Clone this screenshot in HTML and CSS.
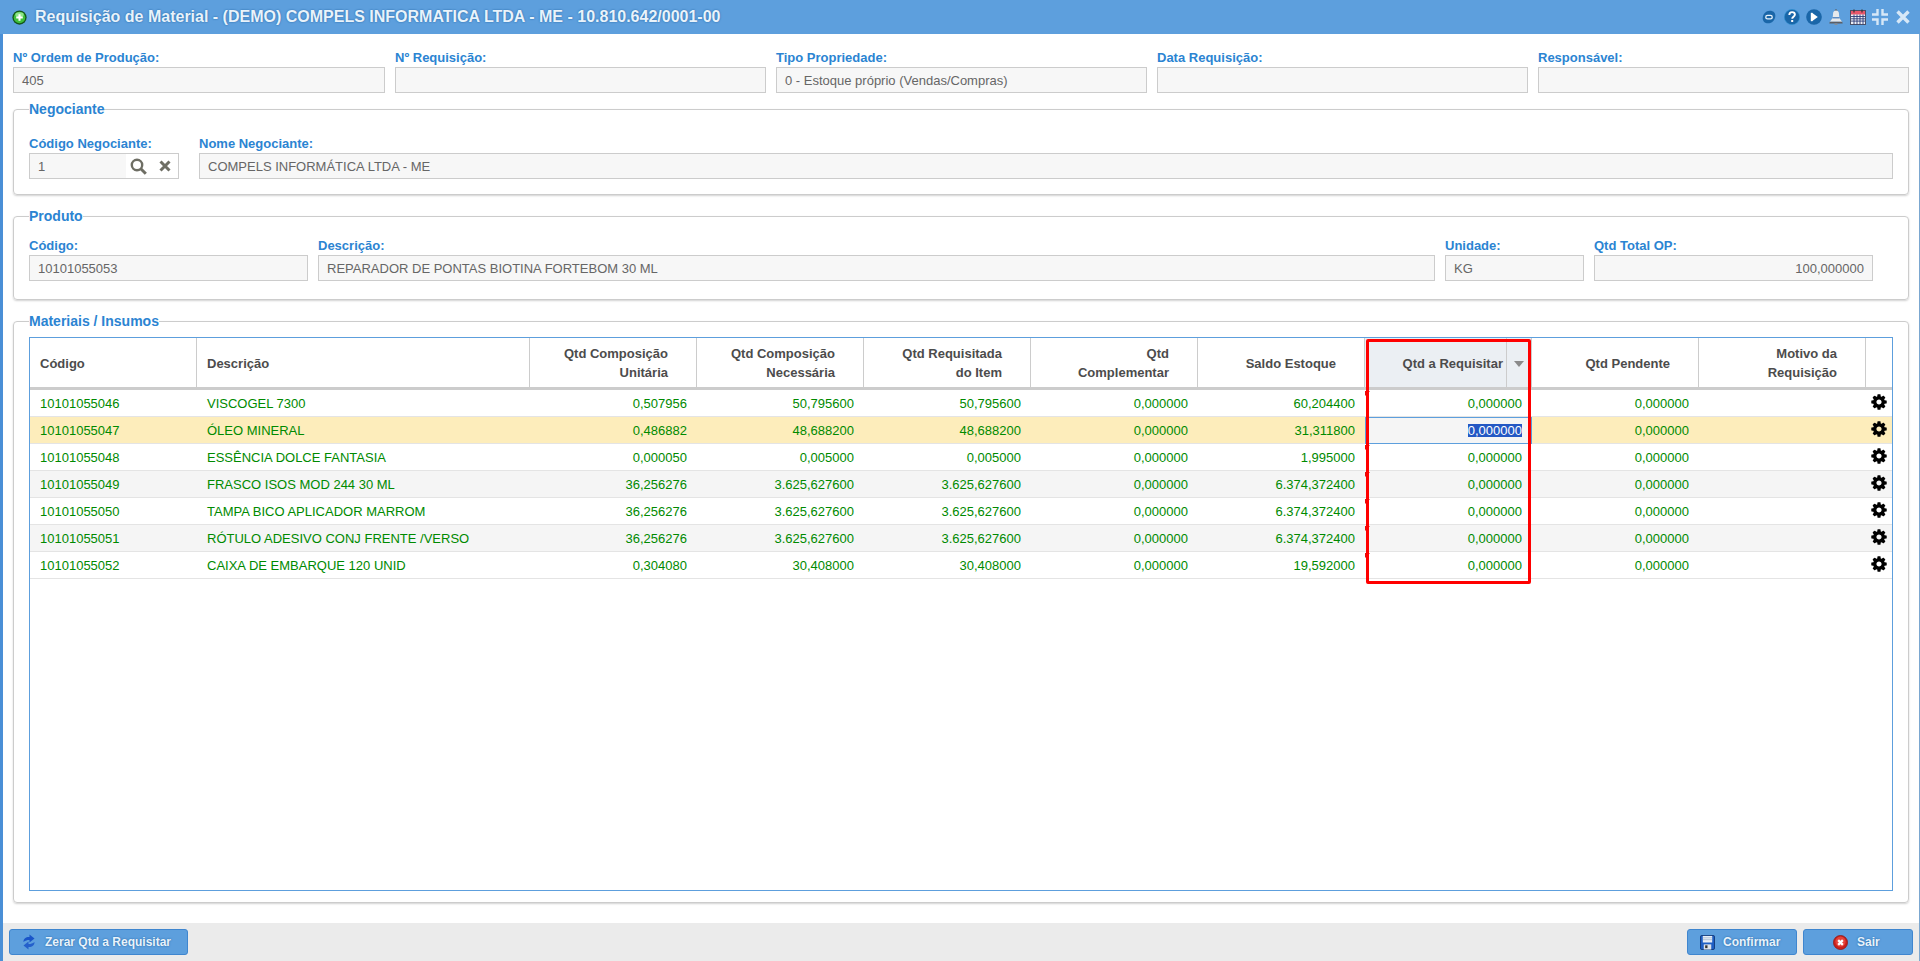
FILE: index.html
```html
<!DOCTYPE html>
<html lang="pt-BR">
<head>
<meta charset="utf-8">
<title>Requisição de Material</title>
<link rel="stylesheet" href="styles.css">
</head>
<body>
<svg class="sprite" aria-hidden="true">
  <symbol id="gear" viewBox="0 0 1792 1792"><path d="M1152 896q0-106-75-181t-181-75-181 75-75 181 75 181 181 75 181-75 75-181zm512-109v222q0 12-8 23t-20 13l-185 28q-19 54-39 91 35 50 107 138 10 12 10 25t-9 23q-27 37-99 108t-94 71q-12 0-26-9l-138-108q-44 23-91 38-16 136-29 186-7 28-36 28h-222q-14 0-24.5-8.5t-11.5-21.5l-28-184q-49-16-90-37l-141 107q-10 9-25 9-14 0-25-11-126-114-165-168-7-10-7-23 0-12 8-23 15-21 51-66.5t54-70.5q-27-50-41-99l-183-27q-13-2-21-12.5t-8-23.5v-222q0-12 8-23t19-13l186-28q14-46 39-92-40-57-107-138-10-12-10-24 0-10 9-23 26-36 98.5-107.5t94.5-71.5q13 0 26 10l138 107q44-23 91-38 16-136 29-186 7-28 36-28h222q14 0 24.5 8.5t11.5 21.5l28 184q49 16 90 37l142-107q9-9 24-9 13 0 25 10 129 119 165 170 7 8 7 22 0 12-8 23-15 21-51 66.5t-54 70.5q26 50 41 98l183 28q13 2 21 12.5t8 23.5z"/></symbol>
</svg>
<div class="window">
  <header class="titlebar">
    <svg class="title-icon" viewBox="0 0 16 16"><circle cx="8" cy="8" r="7.6" fill="#14561a"/><circle cx="8" cy="8" r="6.2" fill="#3fbf3c"/><ellipse cx="8" cy="5" rx="4.5" ry="2.6" fill="#8fe58a"/><path d="M8 4.500v7M4.500 8h7" stroke="#fff" stroke-width="2.200"/></svg>
    <h1 class="title">Requisição de Material - (DEMO) COMPELS INFORMATICA LTDA - ME - 10.810.642/0001-00</h1>
    <div class="win-tools">
      <svg class="tool t-chat" viewBox="0 0 16 16"><path d="M9 .8C13 .8 15.500 3.300 15.200 7c-.4 4.600-3.800 8.200-8.200 8.200C3 15.200.8 12.500.8 9.300.8 4.500 4.500.8 9 .8z" fill="#1a66a8"/><rect x="4.300" y="6.200" width="7.400" height="4" rx="2" fill="#1a66a8" stroke="#e8f2fa" stroke-width="1.500"/></svg>
      <svg class="tool t-help" viewBox="0 0 16 16"><circle cx="8" cy="8" r="7.600" fill="#1a66a8" stroke="#2a8fd0" stroke-width=".6"/><path d="M5.300 6c0-1.800 1.200-2.900 2.800-2.900s2.800 1 2.800 2.500c0 2.200-2.700 2.200-2.700 4.200" fill="none" stroke="#fff" stroke-width="1.900"/><rect x="7.200" y="11" width="2" height="2" fill="#fff"/></svg>
      <svg class="tool t-play" viewBox="0 0 16 16"><circle cx="8" cy="8" r="7.800" fill="#1a66a8"/><path d="M6 3.800v8.400L11.800 8z" fill="#fff"/><rect x="4.800" y="3.800" width="1.600" height="8.400" fill="#fff"/></svg>
      <svg class="tool t-bell" viewBox="0 0 14 16"><circle cx="7" cy="1.500" r="1.200" fill="#5b6570"/><path d="M7 1.500c2 0 3 1.400 3 3.500 0 3.500.8 5.500 3.200 7.800H.8C3.200 10.500 4 8.500 4 5c0-2.100 1-3.500 3-3.500z" fill="#e6e9ec"/><path d="M3.400 8.800h7.200" stroke="#2f6eb8" stroke-width="1.100"/><path d="M.8 12.800h12.400l.5 1.700H.3z" fill="#5b5f66"/><path d="M5.500 14.500h3V16h-3z" fill="#8a8f96"/></svg>
      <svg class="tool t-cal" viewBox="0 0 16 16"><rect x="0.500" y="1.500" width="15" height="14" fill="#eef0f5" stroke="#4a4f66"/><rect x="1" y="2" width="14" height="3.500" fill="#e9576b"/><path d="M4 .5v3M12 .5v3" stroke="#333" stroke-width="1.200"/><path d="M1 7.500h14M1 9.800h14M1 12.100h14M4 5.500v10M7 5.500v10M10 5.500v10M13 5.500v10" stroke="#2b3a78" stroke-width=".9"/></svg>
      <svg class="tool t-comp" viewBox="0 0 16 16"><path d="M5.500 0v5.500H0M10.500 0v5.500H16M5.500 16v-5.500H0M10.500 16v-5.500H16" fill="none" stroke="#d7e8f7" stroke-width="2.400"/></svg>
      <svg class="tool t-close" viewBox="0 0 14 14"><path d="M1.500 1.500l11 11M12.500 1.500l-11 11" stroke="#d7e8f7" stroke-width="3.400"/></svg>
    </div>
  </header>

  <main class="content">
    <section class="fields-top">
      <div class="field"><label>Nº Ordem de Produção:</label><div class="input">405</div></div>
      <div class="field"><label>Nº Requisição:</label><div class="input"></div></div>
      <div class="field"><label>Tipo Propriedade:</label><div class="input">0 - Estoque próprio (Vendas/Compras)</div></div>
      <div class="field"><label>Data Requisição:</label><div class="input"></div></div>
      <div class="field"><label>Responsável:</label><div class="input"></div></div>
    </section>

    <fieldset class="group group-neg">
      <legend>Negociante</legend>
      <div class="fields-neg">
        <div class="field">
          <label>Código Negociante:</label>
          <div class="input input-search">
            <span class="search-value">1</span>
            <span class="search-tools">
              <svg class="ic-search" viewBox="0 0 17 17"><circle cx="7" cy="7" r="5.200" fill="none" stroke="#6e6e64" stroke-width="2.400"/><path d="M10.800 10.800l5 5" stroke="#6e6e64" stroke-width="3"/></svg>
              <svg class="ic-x" viewBox="0 0 12 12"><path d="M1.500 1.500l9 9M10.500 1.500l-9 9" stroke="#6e6e64" stroke-width="3"/></svg>
            </span>
          </div>
        </div>
        <div class="field"><label>Nome Negociante:</label><div class="input">COMPELS INFORMÁTICA LTDA - ME</div></div>
      </div>
    </fieldset>

    <fieldset class="group group-prod">
      <legend>Produto</legend>
      <div class="fields-prod">
        <div class="field"><label>Código:</label><div class="input">10101055053</div></div>
        <div class="field"><label>Descrição:</label><div class="input">REPARADOR DE PONTAS BIOTINA FORTEBOM 30 ML</div></div>
        <div class="field"><label>Unidade:</label><div class="input">KG</div></div>
        <div class="field"><label>Qtd Total OP:</label><div class="input input-num">100,000000</div></div>
      </div>
    </fieldset>

    <fieldset class="group group-mat">
      <legend>Materiais / Insumos</legend>
      <div class="grid">
        <table class="table">
          <colgroup>
            <col class="c-cod"><col class="c-desc"><col class="c-num"><col class="c-num"><col class="c-num"><col class="c-num"><col class="c-num"><col class="c-num"><col class="c-num"><col class="c-num"><col class="c-act">
          </colgroup>
          <thead>
            <tr>
              <th class="left">Código</th>
              <th class="left">Descrição</th>
              <th>Qtd Composição<br>Unitária</th>
              <th>Qtd Composição<br>Necessária</th>
              <th>Qtd Requisitada<br>do Item</th>
              <th>Qtd<br>Complementar</th>
              <th>Saldo Estoque</th>
              <th class="sorted">Qtd a Requisitar</th>
              <th>Qtd Pendente</th>
              <th>Motivo da<br>Requisição</th>
              <th class="last"></th>
            </tr>
          </thead>
          <tbody>
            <tr><td>10101055046</td><td>VISCOGEL 7300</td><td class="n">0,507956</td><td class="n">50,795600</td><td class="n">50,795600</td><td class="n">0,000000</td><td class="n">60,204400</td><td class="n dirty">0,000000</td><td class="n">0,000000</td><td></td><td class="act"><svg class="gear"><use href="#gear"/></svg></td></tr>
            <tr class="current"><td>10101055047</td><td>ÓLEO MINERAL</td><td class="n">0,486882</td><td class="n">48,688200</td><td class="n">48,688200</td><td class="n">0,000000</td><td class="n">31,311800</td><td class="n editing"><span class="sel">0,000000</span></td><td class="n">0,000000</td><td></td><td class="act"><svg class="gear"><use href="#gear"/></svg></td></tr>
            <tr><td>10101055048</td><td>ESSÊNCIA DOLCE FANTASIA</td><td class="n">0,000050</td><td class="n">0,005000</td><td class="n">0,005000</td><td class="n">0,000000</td><td class="n">1,995000</td><td class="n dirty">0,000000</td><td class="n">0,000000</td><td></td><td class="act"><svg class="gear"><use href="#gear"/></svg></td></tr>
            <tr class="alt"><td>10101055049</td><td>FRASCO ISOS MOD 244 30 ML</td><td class="n">36,256276</td><td class="n">3.625,627600</td><td class="n">3.625,627600</td><td class="n">0,000000</td><td class="n">6.374,372400</td><td class="n dirty">0,000000</td><td class="n">0,000000</td><td></td><td class="act"><svg class="gear"><use href="#gear"/></svg></td></tr>
            <tr><td>10101055050</td><td>TAMPA BICO APLICADOR MARROM</td><td class="n">36,256276</td><td class="n">3.625,627600</td><td class="n">3.625,627600</td><td class="n">0,000000</td><td class="n">6.374,372400</td><td class="n dirty">0,000000</td><td class="n">0,000000</td><td></td><td class="act"><svg class="gear"><use href="#gear"/></svg></td></tr>
            <tr class="alt"><td>10101055051</td><td>RÓTULO ADESIVO CONJ FRENTE /VERSO</td><td class="n">36,256276</td><td class="n">3.625,627600</td><td class="n">3.625,627600</td><td class="n">0,000000</td><td class="n">6.374,372400</td><td class="n dirty">0,000000</td><td class="n">0,000000</td><td></td><td class="act"><svg class="gear"><use href="#gear"/></svg></td></tr>
            <tr><td>10101055052</td><td>CAIXA DE EMBARQUE 120 UNID</td><td class="n">0,304080</td><td class="n">30,408000</td><td class="n">30,408000</td><td class="n">0,000000</td><td class="n">19,592000</td><td class="n dirty">0,000000</td><td class="n">0,000000</td><td></td><td class="act"><svg class="gear"><use href="#gear"/></svg></td></tr>
          </tbody>
        </table>
        <div class="highlight"></div>
      </div>
    </fieldset>
  </main>

  <footer class="footer">
    <button class="btn btn-zerar" type="button">
      <svg class="btn-icon" viewBox="0 0 12 16"><path d="M.5 8C.5 4.500 3 2.800 6.500 3V.5L11.500 4.500 6.500 8.500V6C4 6 2.500 6.500.5 8z" fill="#1a55c8"/><path d="M11.500 8c0 3.500-2.500 5.200-6 5v2.500L.5 11.500 5.500 7.500V10c2.500 0 4-.5 6-2z" fill="#1a55c8" opacity=".85"/></svg>
      <span>Zerar Qtd a Requisitar</span>
    </button>
    <div class="footer-right">
      <button class="btn btn-conf" type="button">
        <svg class="btn-icon" viewBox="0 0 16 16"><rect x="0.500" y="0.500" width="15" height="15" rx="1.500" fill="#1f5fc4" stroke="#123a7a"/><rect x="3" y="1" width="10" height="7" fill="#e8eef6"/><path d="M3 3h10M3 5h10" stroke="#9fb4cc" stroke-width=".8"/><rect x="4" y="10" width="8" height="5.500" fill="#dfe4ea"/><rect x="5.500" y="11" width="2.500" height="3" fill="#333"/></svg>
        <span>Confirmar</span>
      </button>
      <button class="btn btn-sair" type="button">
        <svg class="btn-icon" viewBox="0 0 16 16"><circle cx="8" cy="8" r="7.500" fill="#c8201c" stroke="#8e1512" stroke-width=".8"/><circle cx="8" cy="7" r="5.500" fill="#e4423a"/><path d="M5.500 5.500l5 5M10.500 5.500l-5 5" stroke="#fff" stroke-width="2.400"/></svg>
        <span>Sair</span>
      </button>
    </div>
  </footer>
</div>
</body>
</html>
```
FILE: styles.css
```css
* { box-sizing: border-box; }
html, body { margin: 0; height: 100%; }
body { font-family: "Liberation Sans", Arial, sans-serif; font-size: 13px; color: #666; background: #fff; overflow: hidden; }
.sprite { display: none; }

.window { height: 961px; display: flex; flex-direction: column; border-left: 3px solid #4a8fd6; border-right: 1px solid #7ba7d0; }

.titlebar { height: 34px; flex: none; margin-left: -3px; margin-right: -1px; padding: 0 10px 0 12px; background: #5d9fdd; display: flex; align-items: center; }
.title-icon { width: 15px; height: 15px; flex: none; }
.title { margin: 0 0 0 8px; font-size: 16px; font-weight: bold; color: #e9f3fb; text-shadow: 0 0 2px #1d5f9e; white-space: nowrap; }
.win-tools { margin-left: auto; display: flex; align-items: center; }
.tool { width: 16px; height: 16px; flex: none; }
.t-chat { width: 14px; height: 14px; }
.t-help { margin-left: 8px; }
.t-play { margin-left: 6px; }
.t-bell { width: 14px; margin-left: 7px; }
.t-cal { margin-left: 7px; }
.t-comp { margin-left: 6px; }
.t-close { width: 14px; height: 14px; margin-left: 8px; }

.content { flex: 1; min-height: 0; display: flex; flex-direction: column; padding: 15px 10px 0; background: #fff; }

.field { min-width: 0; }
.field label { display: block; height: 18px; line-height: 18px; font-size: 13px; font-weight: bold; color: #2b84d2; white-space: nowrap; }
.input { height: 26px; line-height: 24px; padding: 1px 8px 0; background: #f7f7f7; border: 1px solid #ccc; font-size: 13px; color: #666; white-space: nowrap; overflow: hidden; }
.input-num { text-align: right; }

.fields-top { display: grid; grid-template-columns: 372px repeat(4, 1fr); column-gap: 10px; }

.group { margin: 9px 0 0; padding: 19px 15px 15px; min-width: 0; border: 1px solid #ccc; border-radius: 4px; box-shadow: 0 1px 2px rgba(0,0,0,.18); }
.group legend { padding: 0; height: 14px; line-height: 14px; font-size: 14px; font-weight: bold; color: #2b84d2; }
.group-prod { margin-top: 14px; padding: 14px 15px 18px; }
.group-mat { margin-top: 14px; padding: 9px 15px 11px; flex: 1; min-height: 0; display: flex; flex-direction: column; }

.fields-neg { display: grid; grid-template-columns: 150px 1fr; column-gap: 20px; }
.input-search { display: flex; padding: 0; background: #fff; }
.search-value { width: 96px; padding: 1px 0 0 8px; background: #f7f7f7; }
.search-tools { flex: 1; display: flex; align-items: center; padding-left: 4px; }
.ic-search { width: 17px; height: 17px; }
.ic-x { width: 12px; height: 12px; margin-left: 12px; }

.fields-prod { display: grid; grid-template-columns: 279px 1fr 139px 279px; column-gap: 10px; margin-right: 20px; }

.grid { position: relative; flex: 1; min-height: 0; border: 1px solid #5d9fdd; }
.table { width: 100%; table-layout: fixed; border-collapse: separate; border-spacing: 0; font-size: 13px; }
.c-cod { width: 167px; }
.c-desc { width: 333px; }
.c-num { width: 167px; }
.c-act { width: 26px; }

.table th { height: 52px; padding: 1px 28px 0 10px; text-align: right; font-weight: bold; font-size: 13px; line-height: 19px; color: #4c4c4c; border-right: 1px solid #ccc; border-bottom: 3px solid #ccc; }
.table th.left { text-align: left; }
.table th.last { border-right: 0; padding: 0; }
.table th.sorted { position: relative; background: #ebeff3; }
.table th.sorted::before { content: ""; position: absolute; top: 0; bottom: 0; right: 24px; border-left: 1px solid #ccc; }
.table th.sorted::after { content: ""; position: absolute; top: 23px; right: 7px; border: 5px solid transparent; border-top: 6px solid #8a8a8a; border-bottom: 0; }

.table td { height: 27px; padding: 0 10px; color: #008a00; border-bottom: 1px solid #e4e4e4; white-space: nowrap; overflow: hidden; }
.table td.n { text-align: right; padding-right: 10px; }
.table td.act { padding: 0; text-align: left; }
.table tr.alt td { background: #f5f5f5; }
.table tr.current td { background: #fdedbb; }
.table td.dirty { position: relative; }
.table td.dirty::before { content: ""; position: absolute; left: 0; top: 1px; border-top: 5px solid #e01010; border-right: 5px solid transparent; }
.table tr.current td.editing { background: #f5f5f5; border: 1px solid #5d9fdd; padding-right: 9px; }
.sel { background: #2458c4; color: #fff; display: inline-block; line-height: 13px; }
.gear { display: block; width: 18px; height: 18px; margin: 0 0 2px 4px; fill: #000; }

.highlight { position: absolute; left: 1336px; top: 1px; width: 165px; height: 245px; border: 3px solid #f00; border-radius: 2px; pointer-events: none; }

.footer { flex: none; height: 38px; margin-top: 20px; padding: 6px; background: #ebebeb; display: flex; justify-content: space-between; }
.footer-right { display: flex; gap: 6px; }
.btn { height: 26px; padding: 0; display: flex; align-items: center; font-family: inherit; font-size: 12px; font-weight: bold; color: #e9f3fb; text-shadow: 0 0 2px #1d5f9e; background: #5d9fdd; border: 1px solid #3f86cf; border-radius: 3px; }
.btn-icon { width: 15px; height: 15px; flex: none; }
.btn-zerar { width: 179px; padding-left: 13px; gap: 10px; }
.btn-zerar .btn-icon { width: 12px; height: 16px; }
.btn-conf { width: 110px; padding-left: 12px; gap: 8px; }
.btn-sair { width: 110px; padding-left: 29px; gap: 9px; }
```
